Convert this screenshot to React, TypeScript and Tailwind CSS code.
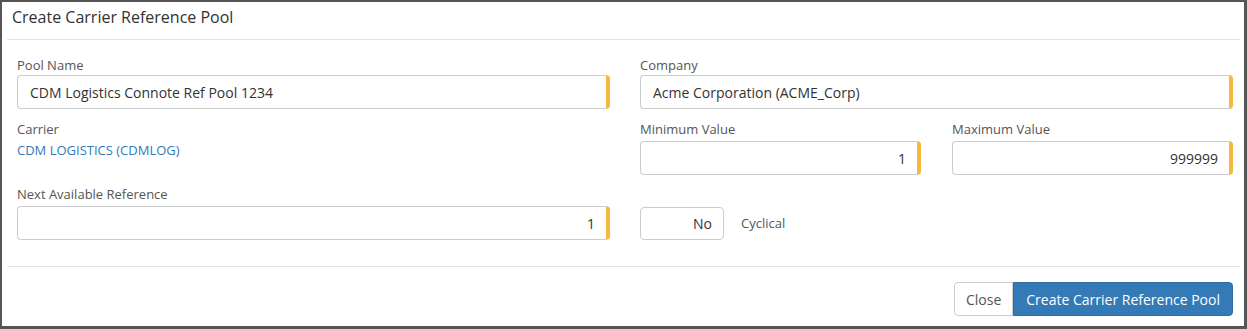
const font = { fontFamily: '"Open Sans", "Liberation Sans", sans-serif' }

function Label({ children, gap = false }: { children: React.ReactNode; gap?: boolean }) {
  return <div className={`text-[13px] leading-[20px] text-[#555] ${gap ? 'mb-[2px]' : ''}`}>{children}</div>
}

function Field({
  label,
  value,
  right,
  gap,
  className = 'mb-[12px]',
}: {
  label: string
  value: string
  right?: boolean
  gap?: boolean
  className?: string
}) {
  return (
    <div className={className}>
      <Label gap={gap}>{label}</Label>
      <div
        className={`flex h-[34px] items-center rounded-[4px] border border-[#ccc] border-r-4 border-r-[#f6b93b] bg-white pl-[12px] pr-[11px] text-[14px] text-[#333] ${
          right ? 'justify-end' : ''
        }`}
      >
        {value}
      </div>
    </div>
  )
}

export default function App() {
  return (
    <div
      style={font}
      className="box-border h-[329px] w-[1247px] border-t-2 border-l-2 border-r-[3px] border-b-[3px] border-[#555] bg-white"
    >
      <div className="ml-[5px] mr-[4px]">
        {/* Header */}
        <div className="h-[38px] border-b border-[#e5e5e5] pl-[5px] pt-[4px]">
          <h4 className="text-[16px] leading-[22px] text-[#333]">Create Carrier Reference Pool</h4>
        </div>

        {/* Body */}
        <div className="grid grid-cols-2 gap-x-[30px] pl-[10px] pr-[7px] pt-[15px] pb-[14px]">
          <Field label="Pool Name" value="CDM Logistics Connote Ref Pool 1234" className="mb-[10px]" />
          <Field label="Company" value="Acme Corporation (ACME_Corp)" className="mb-[10px]" />

          <div className="mb-[9px]">
            <Label>Carrier</Label>
            <a className="block pt-[1px] text-[13px] leading-[20px] text-[#337ab7]">CDM LOGISTICS (CDMLOG)</a>
          </div>
          <div className="grid grid-cols-2 gap-x-[31px]">
            <Field label="Minimum Value" value="1" right gap className="mb-[9px]" />
            <Field label="Maximum Value" value="999999" right gap className="mb-[9px]" />
          </div>

          <Field label="Next Available Reference" value="1" right gap />
          <div className="mb-[12px] flex items-end">
            <div className="flex h-[33px] w-[84px] items-center justify-end rounded-[4px] border border-[#ccc] pr-[11px] text-[14px] text-[#333]">
              No
            </div>
            <span className="ml-[17px] pb-[7px] text-[13px] leading-[20px] text-[#555]">Cyclical</span>
          </div>
        </div>

        {/* Footer */}
        <div className="flex justify-end border-t border-[#e5e5e5] pr-[7px] pt-[15px]">
          <button className="h-[34px] rounded-l-[4px] border border-[#ccc] bg-white px-[11px] text-[14px] text-[#555]">
            Close
          </button>
          <button className="h-[34px] rounded-r-[4px] border border-[#2e6da4] bg-[#337ab7] px-[12px] text-[14px] text-white">
            Create Carrier Reference Pool
          </button>
        </div>
      </div>
    </div>
  )
}
